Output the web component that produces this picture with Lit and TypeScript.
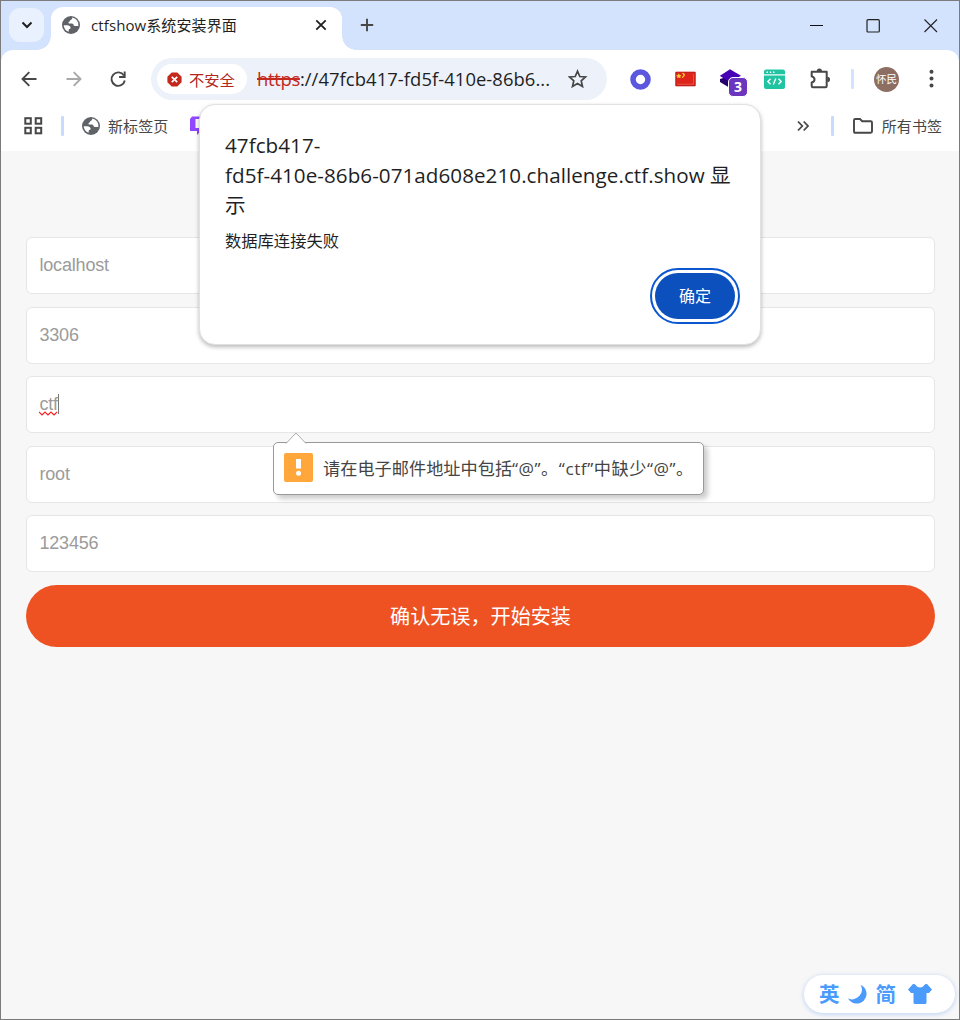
import { LitElement, html, css } from "lit";
import { customElement } from "lit/decorators.js";

const globe = html`<svg width="20" height="20" viewBox="0 0 20 20">
  <circle cx="10" cy="10" r="9" fill="#5f6368"/>
  <path d="M11.2 2.6c.2 1.6-.8 2.1-1.9 2.6-.9.4-.4 1.4-1.4 1.8-.8.3-.6 1.5.3 1.5h2.600c1.200 0 1.700.8 1.900 1.800.2.900 1.300.700 2.100.700h2.600a7.300 7.300 0 0 0-6.200-8.400z" fill="#fff"/>
  <path d="M2.700 10.300h3.600c1.700 0 3.300 1 3.300 2.600 0 .9-1 .9-1.500 1.200-.6.4-.2 1.600-.5 2.700a7.300 7.300 0 0 1-4.900-6.500z" fill="#fff"/>
</svg>`;

@customElement("browser-tabs")
export class BrowserTabs extends LitElement {
  static styles = css`
    :host { display: flex; height: 49px; background: #d3e2fd; padding-left: 8px; box-sizing: border-box; }
    svg { display: block; flex: none; }
    .menu { width: 35px; height: 34px; margin: 7px 7px 0 0; border-radius: 11px; background: #e9f0fe; display: grid; place-items: center; flex: none; }
    .tab { width: 291px; box-sizing: border-box; margin-top: 6px; height: 43px; background: #fff; border-radius: 12px 12px 0 0; display: flex; align-items: center; padding: 0 15px 7px 10px; position: relative; flex: none; }
    .tab::before, .tab::after { content: ""; position: absolute; bottom: 0; width: 14px; height: 14px; }
    .tab::before { left: -14px; background: radial-gradient(circle at 0 0, transparent 13.500px, #fff 14px); }
    .tab::after { right: -14px; background: radial-gradient(circle at 100% 0, transparent 13.500px, #fff 14px); }
    .title { margin-left: 10px; flex: 1; font-size: 15px; letter-spacing: .1px; color: #1f1f1f; white-space: nowrap; line-height: 22px; }
    .plus { margin: 16px auto 0 17px; }
    .controls { display: flex; gap: 41px; margin: 17px 20px 0 0; }
  `;
  render() {
    return html`
      <div class="menu"><svg width="12" height="8" viewBox="0 0 12 8"><path d="M1.500 1.500 6 6l4.500-4.500" fill="none" stroke="#1f1f1f" stroke-width="2"/></svg></div>
      <div class="tab">${globe}<span class="title">ctfshow系统安装界面</span>
        <svg width="12" height="12" viewBox="0 0 12 12"><path d="M1.300 1.300l9.400 9.400M10.700 1.300 1.300 10.700" stroke="#1f1f1f" stroke-width="1.800"/></svg>
      </div>
      <svg class="plus" width="16" height="16" viewBox="0 0 16 16"><path d="M8 1.800v12.400M1.800 8h12.400" stroke="#474747" stroke-width="1.900"/></svg>
      <div class="controls">
        <svg width="16" height="16" viewBox="0 0 16 16"><path d="M1 7.500h13" stroke="#111" stroke-width="1"/></svg>
        <svg width="16" height="16" viewBox="0 0 16 16"><rect x="1" y="1.700" width="12.300" height="12.300" rx="1" fill="none" stroke="#222" stroke-width="1.200"/></svg>
        <svg width="16" height="16" viewBox="0 0 16 16"><path d="M1.500 1.500l12.500 12.500M14 1.500 1.500 14" stroke="#222" stroke-width="1.100"/></svg>
      </div>`;
  }
}

@customElement("browser-toolbar")
export class BrowserToolbar extends LitElement {
  static styles = css`
    :host { display: flex; align-items: center; height: 58px; box-sizing: border-box; padding-left: 16px; }
    svg { display: block; flex: none; }
    .nav { display: flex; gap: 20.600px; width: 134px; }
    .omni { width: 456px; height: 42px; border-radius: 21px; background: #ecf1fa; display: flex; align-items: center; box-sizing: border-box; padding: 0 19px 0 6px; flex: none; }
    .chip { width: 90px; height: 30px; border-radius: 15px; background: #fff; display: flex; align-items: center; gap: 7px; box-sizing: border-box; padding-left: 10px; color: #b3261e; font-size: 15.300px; flex: none; white-space: nowrap; }
    .url { margin-left: 10px; flex: 1; white-space: nowrap; font-size: 18.400px; line-height: 26px; color: #1f1f1f; letter-spacing: .07px; }
    .bad { color: #c5281c; text-decoration: line-through; text-decoration-thickness: 2px; letter-spacing: -.3px; }
    .exts { display: flex; align-items: center; margin-left: 22px; }
    .ring { margin-right: 24px; }
    .flag { margin-right: 24px; }
    .stack { position: relative; margin-right: 15px; width: 29px; height: 30px; }
    .count { position: absolute; left: 8px; top: 13px; width: 18px; height: 18px; border: 1px solid #fff; border-radius: 5px; background: #6b36bd; color: #fff; font-size: 14px; font-weight: 700; line-height: 18px; text-align: center; }
    .code { margin-right: 23px; }
    .sep { width: 3px; height: 20px; border-radius: 1px; background: #d3e3fd; margin: 0 20px 0 18px; }
    .avatar { width: 25px; height: 25px; border-radius: 50%; background: #8d6e63; color: #fff; font-size: 10.500px; line-height: 25px; text-align: center; white-space: nowrap; margin-right: 29px; }
  `;
  render() {
    return html`
      <div class="nav">
        <svg width="24" height="24" viewBox="0 0 24 24"><path d="M19.500 12H6M12.300 5.200 5.500 12l6.800 6.800" fill="none" stroke="#474747" stroke-width="1.900"/></svg>
        <svg width="24" height="24" viewBox="0 0 24 24"><path d="M4.500 12H18M11.700 5.200l6.800 6.800-6.800 6.800" fill="none" stroke="#a8a8a8" stroke-width="1.900"/></svg>
        <svg width="24" height="24" viewBox="0 0 24 24"><path d="M17.900 8.500A6.700 6.700 0 1 0 18.800 13.500" fill="none" stroke="#474747" stroke-width="1.900"/><path d="M18.700 4.400v5.600h-5.600" fill="none" stroke="#474747" stroke-width="1.900"/></svg>
      </div>
      <div class="omni">
        <div class="chip"><svg width="15" height="15" viewBox="0 0 15 15"><path d="M4.700.4h5.600l4.300 4.300v5.600l-4.300 4.300H4.700L.4 10.300V4.700z" fill="#c5281c"/><path d="M4.800 4.800l5.400 5.400M10.200 4.800l-5.400 5.400" stroke="#fff" stroke-width="1.700"/></svg><span>不安全</span></div>
        <div class="url"><span class="bad">https</span>://47fcb417-fd5f-410e-86b6...</div>
        <svg width="20" height="20" viewBox="0 0 20 20"><path d="M9.500 2.200l2.300 5.300 5.700.5-4.300 3.800 1.300 5.700-5-3-5 3 1.300-5.700L1.500 8l5.700-.5z" fill="none" stroke="#474747" stroke-width="1.700"/></svg>
      </div>
      <div class="exts">
        <svg class="ring" width="22" height="22" viewBox="0 0 22 22"><circle cx="11.500" cy="11.500" r="7.500" fill="none" stroke="#5b58df" stroke-width="5.600"/></svg>
        <svg class="flag" width="21" height="16" viewBox="0 0 22 16"><rect x=".5" y=".5" width="21" height="15" fill="#de241b"/><path d="M1 15V1h20v14z" fill="none" stroke="#b9201c"/><path d="M2.500 13.500h17v-11" fill="none" stroke="#f06a5a" stroke-width=".7"/><path d="M4 2l.9 1.800 2 .2-1.400 1.300.3 2L4 6.300l-1.800 1 .3-2L1.100 4l2-.2zM6.800 1.500l2.700.2 1 2-1.500 2.500-2 1 .6-1.500 1.200-1.500-.5-1.500z" fill="#fc3"/></svg>
        <div class="stack">
          <svg width="22" height="26" viewBox="1 0 22 26"><path d="M1 15v3l10 6V12z" fill="#23006c"/><path d="M11 5.200 22 11.700 11 18.200.800 12z" fill="#4702b5"/></svg>
          <div class="count">3</div>
        </div>
        <svg class="code" width="21" height="20" viewBox="0 0 21 20"><rect width="21" height="19.500" y=".5" rx="2" fill="#20c3a2"/><path d="M0 5.900h21" stroke="#fff" stroke-width="1.200"/><path d="M2.500 3.200H4M5.800 3.200h1.500M9 3.200h1.500" stroke="#fff" stroke-width="1.400"/><path d="M6.500 9.700 3.800 12.500l2.700 2.700M14.500 9.700l2.700 2.800-2.700 2.700M11.800 9.500l-2.500 6" fill="none" stroke="#fff" stroke-width="1.400"/></svg>
        <svg width="25" height="24" viewBox="0 0 25 24"><path d="M3.700 4.800h15V19q0 1.200-1.200 1.200H4.900q-1.200 0-1.200-1.200v-3.500q2.800-.6 2.800-3T3.700 9.400z" fill="none" stroke="#474747" stroke-width="2" stroke-linejoin="round"/><path d="M8.800 4.200a2.600 2.600 0 0 1 5.200 0zM19.300 9.700a2.700 2.700 0 0 1 0 5.400z" fill="#474747"/></svg>
        <div class="sep"></div>
        <div class="avatar">怀民</div>
        <svg width="6" height="20" viewBox="0 0 6 20"><g fill="#474747"><circle cx="3.500" cy="2.800" r="2"/><circle cx="3.500" cy="9.600" r="2"/><circle cx="3.500" cy="16.400" r="2"/></g></svg>
      </div>`;
  }
}

@customElement("bookmark-bar")
export class BookmarkBar extends LitElement {
  static styles = css`
    :host { display: flex; align-items: center; height: 43px; box-sizing: border-box; padding: 0 17px 8px 22px; font-size: 15px; color: #474747; white-space: nowrap; }
    svg { display: block; flex: none; }
    .sep { width: 3px; height: 20px; border-radius: 1px; background: #c7dcfc; flex: none; }
    .left { margin: 0 17px 0 18px; }
    .label { margin-left: 7px; letter-spacing: .1px; }
    .all { margin-left: 8px; letter-spacing: .05px; }
    .mark { margin: 0 auto 0 21px; }
    .right { margin: 0 18px 0 21px; }
  `;
  render() {
    return html`
      <svg width="20" height="20" viewBox="0 0 20 20"><g fill="none" stroke="#474747" stroke-width="2"><rect x="2.300" y="2.200" width="5.500" height="5.500"/><rect x="12.700" y="2.200" width="5.500" height="5.500"/><rect x="2.300" y="11.800" width="5.500" height="5.500"/><rect x="12.700" y="11.800" width="5.500" height="5.500"/></g></svg>
      <div class="sep left"></div>${globe}<span class="label">新标签页</span>
      <svg class="mark" width="20" height="20" viewBox="0 0 20 20"><path d="M3 .5h15V15h-6l-4 4v-4H1V3z" fill="#9147ff"/><path d="M6.500 3h10v9h-10z" fill="#fff"/></svg>
      <svg width="14" height="14" viewBox="0 0 14 14"><path d="M2 2.500 6.300 7 2 11.500M7.700 2.500 12 7l-4.300 4.500" fill="none" stroke="#474747" stroke-width="1.800"/></svg>
      <div class="sep right"></div>
      <svg width="22" height="18" viewBox="0 0 22 18"><path d="M2 3.200Q2 2 3.200 2H8l2.200 2.200h8.600q1.200 0 1.200 1.200v9.200q0 1.200-1.200 1.200H3.200Q2 15.800 2 14.600z" fill="none" stroke="#474747" stroke-width="1.900"/></svg>
      <span class="all">所有书签</span>`;
  }
}

@customElement("install-form")
export class InstallForm extends LitElement {
  static styles = css`
    :host { display: flex; flex-direction: column; gap: 12.600px; padding: 86px 24px 0 25px; }
    .field { height: 57px; box-sizing: border-box; border: 1px solid #e6e6e6; border-radius: 6px; background: #fff; padding: 0 12.400px 1px; display: flex; align-items: center; font: 18px "Liberation Sans", sans-serif; color: #9b9b9b; }
    .value { display: block; line-height: 24px; letter-spacing: -.17px; position: relative; }
    .active { border-right: 1px solid #777; line-height: 20px; }
    .wave { position: absolute; left: 0; bottom: -2px; }
    .submit { height: 62px; border: 0; padding: 2px 0 0; border-radius: 31px; background: #ee5223; color: #fff; font: 20.100px/60px "Open Sans", "Noto Sans CJK SC", sans-serif; }
  `;
  render() {
    return html`${["localhost", "3306", "ctf", "root", "123456"].map(v => html`
      <div class="field"><span class="value ${v === "ctf" ? "active" : ""}">${v}${v === "ctf" ? html`<svg class="wave" width="19" height="5" viewBox="0 0 19 5"><path d="M0 1l3 3 3-3 3 3 3-3 3 3 3-3" fill="none" stroke="#f22" stroke-width="1.200"/></svg>` : ""}</span></div>`)}
      <button class="submit">确认无误，开始安装</button>`;
  }
}

@customElement("alert-dialog")
export class AlertDialog extends LitElement {
  static styles = css`
    :host { position: absolute; left: 198px; top: 103px; width: 562px; height: 241px; box-sizing: border-box; border: 1px solid #e0e1e2; border-radius: 16px; background: #fff; box-shadow: 0 2px 4px rgba(0,0,0,.28); padding: 25px; display: flex; flex-direction: column; color: #1f1f1f; }
    .origin { font-size: 20.600px; line-height: 30px; white-space: nowrap; letter-spacing: .06px; }
    .message { font-size: 16.300px; line-height: 24px; margin-top: 9px; }
    .ok { width: 80px; height: 46px; margin: 20px 0 0 auto; border: 0; padding: 0; border-radius: 23px; background: #0b50bd; outline: 2px solid #0b57d0; outline-offset: 3px; color: #fff; font: 16px/44px "Open Sans", "Noto Sans CJK SC", sans-serif; }
  `;
  render() {
    return html`<div class="origin">47fcb417-<br>fd5f-410e-86b6-071ad608e210.challenge.ctf.show 显<br>示</div>
      <div class="message">数据库连接失败</div><button class="ok">确定</button>`;
  }
}

@customElement("validation-bubble")
export class ValidationBubble extends LitElement {
  static styles = css`
    :host { position: absolute; left: 272px; top: 441px; width: 431px; height: 53px; box-sizing: border-box; border: 1px solid #999; border-radius: 5px; background: #fff; box-shadow: 4px 4px 5px rgba(0,0,0,.2); display: flex; align-items: center; padding: 0 10px 2px; gap: 10px; color: #444; font-size: 17.200px; white-space: nowrap; }
    svg { display: block; flex: none; }
    .arrow { position: absolute; left: 11px; top: -11px; }
    .quoted { letter-spacing: .55px; }
  `;
  render() {
    return html`<svg class="arrow" width="22" height="12" viewBox="0 0 22 12"><path d="M1 11.500 11 1l10 10.500" fill="#fff" stroke="#aaa"/></svg>
      <svg width="29" height="29" viewBox="0 0 29 29"><rect width="29" height="29" rx="2" fill="#ffa73b"/><path d="M12 6h5v9.500h-5z" fill="#fff"/><circle cx="14.500" cy="20.300" r="2.500" fill="#fff"/></svg>
      <span>请在电子邮件地址中包括<span class="quoted">“@”。“ctf”中缺少“@”。</span></span>`;
  }
}

@customElement("ime-bar")
export class ImeBar extends LitElement {
  static styles = css`
    :host { position: absolute; left: 803px; top: 974px; width: 151px; height: 38px; box-sizing: border-box; border-radius: 19px; background: #fff; box-shadow: 0 1px 5px rgba(90,150,240,.4); display: flex; align-items: center; padding-left: 15px; gap: 8px; color: #4a9bfc; font-size: 20.500px; font-weight: 700; line-height: 36px; }
    svg { display: block; flex: none; }
    .shirt { margin-left: 3px; }
  `;
  render() {
    return html`<span>英</span><svg width="20" height="20" viewBox="0 0 20 20"><path d="M12.500.7A9.800 9.800 0 1 1 0 14.200 9.600 9.600 0 0 0 12.500.7z" fill="#4a9bfc"/></svg><span>简</span>
      <svg class="shirt" width="26" height="22" viewBox="0 0 26 22"><path d="M7.500 1q5.500 7 11 0h1.500L25 6.500 22 10h-2.500v9.500q0 1.500-1.500 1.500H8q-1.500 0-1.500-1.500V10H4L1 6.500 6 1z" fill="#4a9bfc"/></svg>`;
  }
}

@customElement("app-root")
export class AppRoot extends LitElement {
  static styles = css`
    :host { display: block; position: relative; width: 960px; height: 1020px; box-sizing: border-box; border: 1px solid #7b7b7b; background: #f7f7f7; overflow: hidden; font-family: "Open Sans", "Noto Sans CJK SC", sans-serif; }
    .chrome { background: #d3e2fd; }
    .bars { background: #fff; border-radius: 12px 12px 0 0; height: 101px; }
  `;
  render() {
    return html`<div class="chrome"><browser-tabs></browser-tabs><div class="bars"><browser-toolbar></browser-toolbar><bookmark-bar></bookmark-bar></div></div>
      <install-form></install-form><validation-bubble></validation-bubble><alert-dialog></alert-dialog><ime-bar></ime-bar>`;
  }
}
